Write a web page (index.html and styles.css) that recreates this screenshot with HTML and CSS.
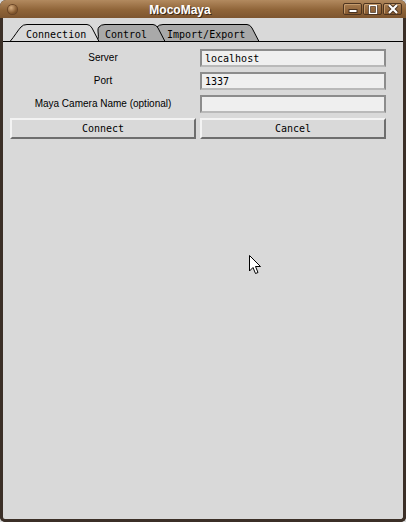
FILE: index.html
```html
<!DOCTYPE html>
<html lang="en">
<head>
    <meta charset="UTF-8">
    <title>MocoMaya</title>
    <link rel="stylesheet" href="styles.css">
</head>
<body>
    <div class="window">
        <div class="titlebar">
            <span class="menu-ball"></span>
            <div class="title">MocoMaya</div>
            <div class="wm-buttons">
                <span class="wm-btn">
                    <svg width="12" height="8" viewBox="0 0 12 8"><rect x="2" y="4.5" width="8" height="3" fill="#fff" stroke="#4a3320" stroke-width="1"/></svg>
                </span>
                <span class="wm-btn">
                    <svg width="12" height="9" viewBox="0 0 12 9"><rect x="2.5" y="0.5" width="7" height="8" fill="none" stroke="#4a3320" stroke-width="3"/><rect x="2.5" y="0.5" width="7" height="8" fill="none" stroke="#fff" stroke-width="1.4"/></svg>
                </span>
                <span class="wm-btn">
                    <svg width="12" height="10" viewBox="0 0 12 10"><path d="M2 1 L10 9 M10 1 L2 9" stroke="#4a3320" stroke-width="4"/><path d="M2 1 L10 9 M10 1 L2 9" stroke="#fff" stroke-width="2.2"/></svg>
                </span>
            </div>
        </div>

        <div class="client">
            <svg class="tabs" width="400" height="24" viewBox="0 0 400 24">
                <g transform="translate(-3,-18)">
                    <path class="tab" d="M153,41.5 C157,38 154,30 157,27 Q159,24.5 163,24.5 L247,24.5 Q250,24.5 252,28 L259,41.5 Z"/>
                    <path class="tab" d="M96,41.5 C101,38 96,30 99,27 Q101,24.5 105,24.5 L153,24.5 Q156,24.5 158,28 L165,41.5 Z"/>
                    <path class="tab active" d="M10,41.5 C14,37 18,30 21,27 Q23,24.5 27,24.5 L87,24.5 Q90,24.5 92,28 L99,41.5 Z"/>
                    <line x1="3" y1="41.5" x2="403" y2="41.5" stroke="#000"/>
                    <text class="tab-label" x="26" y="37.5">Connection</text>
                    <text class="tab-label" x="105" y="37.5">Control</text>
                    <text class="tab-label" x="167" y="37.5">Import/Export</text>
                </g>
            </svg>

            <div class="panel">
                <label class="field-label">Server</label>
                <input class="field" type="text" value="localhost">

                <label class="field-label">Port</label>
                <input class="field" type="text" value="1337">

                <label class="field-label">Maya Camera Name (optional)</label>
                <input class="field" type="text" value="">

                <button class="btn">Connect</button>
                <button class="btn">Cancel</button>
            </div>

            <svg class="cursor" width="13" height="21" viewBox="0 0 13 21">
                <path d="M0.5 0.5 L0.5 16 L4 12.5 L6.5 18.5 L9 17.5 L6.5 11.5 L11.5 11.5 Z" fill="#fff" stroke="#000" stroke-width="1"/>
            </svg>
        </div>
    </div>
</body>
</html>
```

FILE: styles.css
```css
body {
    margin: 0;
    padding: 0;
    background-color: #d9d9d9;
    font-family: "Liberation Sans", Arial, sans-serif;
}

.window {
    width: 406px;
    height: 522px;
    display: flex;
    flex-direction: column;
    border-radius: 6px 6px 5px 5px;
    overflow: hidden;
    background-color: #3b2f27;
}

.titlebar {
    height: 18px;
    flex: none;
    display: flex;
    align-items: center;
    padding: 0 4px 0 8px;
    background: linear-gradient(#b28a5f, #8f6438 55%, #7d552f);
}

.menu-ball {
    width: 9px;
    height: 9px;
    border-radius: 50%;
    background: radial-gradient(circle at 35% 30%, #d6ad80, #8a5e33 60%, #5a3a1e);
    box-shadow: 0 0 0 1px #6a4526;
    margin-top: 1px;
}

.title {
    flex: 1;
    text-align: center;
    color: #fff;
    font-weight: bold;
    font-size: 12px;
    text-shadow: 1px 1px 0 #3d2a18;
    padding-top: 1px;
}

.wm-buttons {
    display: flex;
    gap: 1px;
}

.wm-btn {
    width: 19px;
    height: 12px;
    box-sizing: border-box;
    display: flex;
    align-items: center;
    justify-content: center;
    border: 1px solid #4e3520;
    border-radius: 2px;
    background: linear-gradient(#a57b4f, #86592f);
    box-shadow: inset 1px 1px 0 #c49a6c;
}

.client {
    flex: 1;
    position: relative;
    background-color: #d9d9d9;
    border: 3px solid #3b2f27;
    border-top: none;
    border-radius: 0 0 5px 5px;
}

.tabs {
    display: block;
}

.tab {
    fill: #a9a9a9;
    stroke: #000;
    stroke-width: 1;
}

.tab.active {
    fill: #d9d9d9;
}

.tab-label {
    font-family: "DejaVu Sans Mono", monospace;
    font-size: 10px;
    fill: #000;
}

.panel {
    display: grid;
    grid-template-columns: 186px 186px;
    grid-auto-rows: 18px;
    column-gap: 4px;
    row-gap: 5px;
    margin: 7px 0 0 7px;
}

.field-label {
    font-size: 10px;
    color: #000;
    text-align: center;
    line-height: 18px;
}

.field {
    box-sizing: border-box;
    height: 18px;
    margin: 0;
    padding: 0 3px;
    border: 2px solid #8c8c8c;
    border-bottom-color: #b9b9b9;
    background-color: #efefef;
    font-family: "DejaVu Sans Mono", monospace;
    font-size: 10px;
    color: #000;
    outline: none;
}

.btn {
    box-sizing: border-box;
    height: 21px;
    margin: 0;
    padding: 0;
    border: 2px solid;
    border-color: #f3f3f3 #6e6e6e #6e6e6e #f3f3f3;
    background-color: #d9d9d9;
    font-family: "DejaVu Sans Mono", monospace;
    font-size: 10px;
    color: #000;
}

.cursor {
    position: absolute;
    left: 246px;
    top: 237px;
}
```
